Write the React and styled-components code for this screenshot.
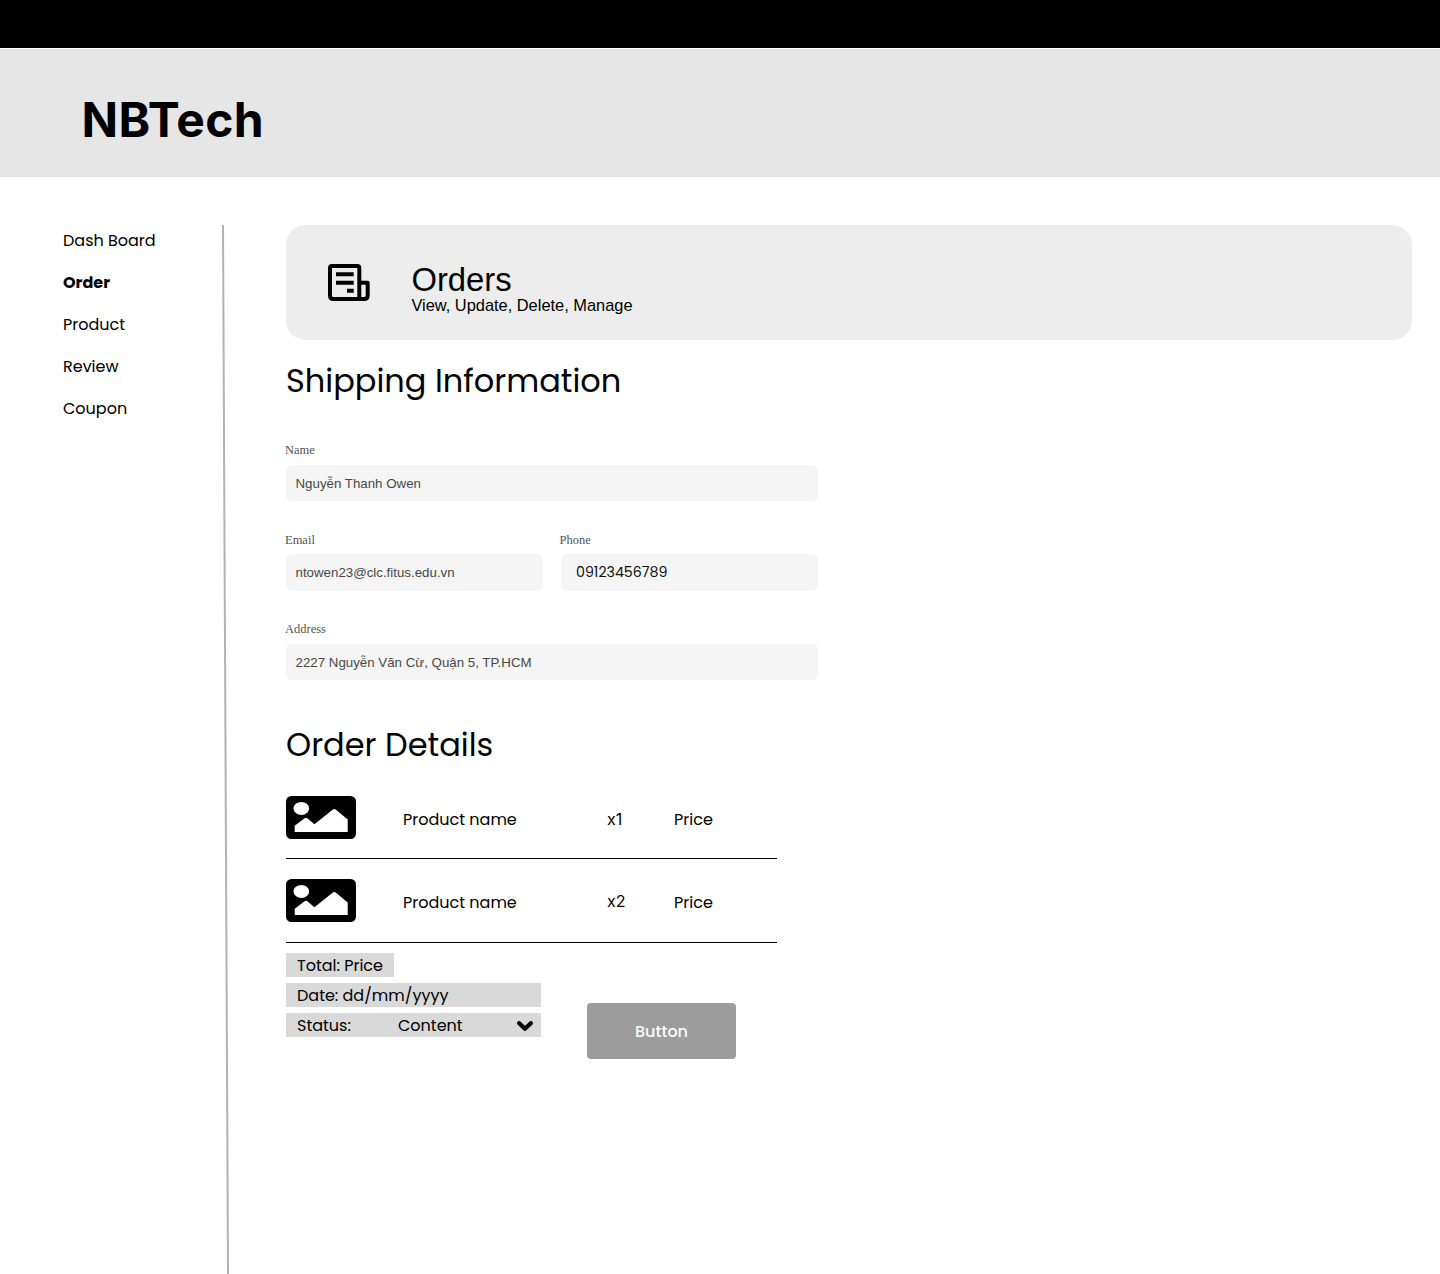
import React from "react";
import styled, { createGlobalStyle } from "styled-components";

const Global = createGlobalStyle`
  * { box-sizing: border-box; }
  body {
    margin: 0;
    background: #fff;
    color: #000;
    font-family: Poppins, Inter, "Open Sans", sans-serif;
    font-size: 16px;
    line-height: 24px;
  }
  h1, h2, p, ul { margin: 0; padding: 0; font-weight: 400; list-style: none; }
  svg { display: block; flex: none; }
`;

const Page = styled.div`
  height: 1274px;
  overflow: hidden;
  display: flex;
  flex-direction: column;
`;

const TopBar = styled.div`
  flex: none;
  height: 48px;
  background: #000;
`;

const Header = styled.header`
  flex: none;
  display: flex;
  align-items: center;
  height: 128px;
  margin-top: 1px;
  padding: 14px 0 0 81.5px;
  background: #e6e6e6;
`;

const Brand = styled.div`
  font-family: Inter, sans-serif;
  font-size: 48px;
  line-height: 60px;
  font-weight: 680;
  letter-spacing: 0.3px;
`;

const Body = styled.div`
  flex: 1;
  display: flex;
  padding: 48px 0 0 63px;
`;

const Nav = styled.nav`
  display: flex;
  flex-direction: column;
  gap: 18px;
  width: 159px;
  padding-top: 4px;
`;

const NavItem = styled.span`
  font-weight: ${(p) => (p.$active ? 700 : 400)};
`;

const Main = styled.main`
  width: 1126px;
  margin-left: 56px;
`;

const Banner = styled.section`
  display: flex;
  gap: 41.4px;
  height: 115px;
  padding: 39px 0 0 42px;
  border-radius: 20px;
  background: #ededed;
  font-family: "Liberation Sans", Arial, sans-serif;
`;

const BannerText = styled.div`
  margin-top: -3px;
`;

const BannerTitle = styled.h1`
  font-size: 32.8px;
  line-height: 37px;
`;

const BannerSub = styled.p`
  margin-top: -1px;
  font-size: 16.4px;
  line-height: 16px;
`;

const Heading = styled.h2`
  font-size: 32px;
  line-height: 48px;
`;

const ShippingSection = styled.section`
  padding-top: 17px;
`;

const Form = styled.form`
  display: grid;
  grid-template-columns: 257px 257px;
  column-gap: 17.5px;
  row-gap: 31px;
  width: 531.5px;
  margin: 36.5px 0 41px;
`;

const Field = styled.label`
  grid-column: ${(p) => (p.$wide ? "1 / -1" : "auto")};
`;

const Label = styled.span`
  display: block;
  height: 23px;
  margin-left: -1px;
  color: #555;
  font: 12.5px/16px "Liberation Serif", "Times New Roman", serif;

  ${Field} + ${Field} & {
    height: 22.5px;
    margin-top: -0.5px;
  }
`;

const Value = styled.span`
  display: flex;
  align-items: center;
  height: 36.5px;
  padding: 1.5px 0 0 9.5px;
  border-radius: 6px;
  background: #f5f5f5;
  color: #484848;
  font: 13.3px/16px "Liberation Sans", Arial, sans-serif;
`;

const PhoneValue = styled(Value)`
  padding: 0 0 0 15.5px;
  color: #111;
  font: 14.2px/20px Poppins, Inter, sans-serif;
`;

const ItemList = styled.ul`
  display: flex;
  flex-direction: column;
  gap: 20px;
  width: 491px;
  margin-top: 27px;
`;

const Item = styled.li`
  display: grid;
  grid-template-columns: 117px 204px 67px auto;
  padding-bottom: ${(p) => p.$space}px;
  border-bottom: 1px solid #000;
`;

const Cell = styled.span`
  padding-top: 12px;
`;

const Quantity = styled.span`
  padding-top: ${(p) => (p.$raised ? 10 : 11)}px;
  font-family: Inter, sans-serif;
`;

const Footer = styled.div`
  display: flex;
  align-items: flex-start;
  gap: 46px;
  margin-top: 10px;
`;

const Summary = styled.div`
  display: flex;
  flex-direction: column;
  gap: 6px;
  width: 255px;
`;

const SummaryRow = styled.div`
  display: flex;
  align-items: flex-start;
  width: ${(p) => (p.$short ? "108px" : "100%")};
  height: 24px;
  padding: 1px 8px 0 11px;
  background: #d9d9d9;
`;

const StatusLabel = styled.span`
  width: 101px;
`;

const StatusArrow = styled.svg`
  margin: 7px 0 0 auto;
`;

const Button = styled.button`
  width: 149px;
  height: 56px;
  margin-top: 50px;
  padding: 2px 0 0;
  border: 0;
  border-radius: 4px;
  background: #9c9c9c;
  color: #fafafa;
  font: 500 16px/24px Poppins, Inter, sans-serif;
`;

const Divider = () => (
  <svg width="8" height="1049" viewBox="0 0 8 1049">
    <path d="M1 0L6 1049" stroke="#b2b2b2" strokeWidth="2" />
  </svg>
);

const OrdersIcon = () => (
  <svg width="42" height="37" viewBox="0 0 42 37" fill="none" stroke="#000" strokeWidth="4">
    <path
      strokeLinejoin="round"
      d="M31.3 35V4Q31.3 2 29.3 2H4Q2 2 2 4V31.5Q2 35 5.5 35H36.2Q39.7 35 39.7 31.5V18.7H31.3"
    />
    <path d="M8 10.3H25.7M8 18.7H25.7M19 26.7H25.7" />
  </svg>
);

const PictureIcon = () => (
  <svg width="70" height="43" viewBox="0 0 70 43">
    <rect width="70" height="43" rx="5.5" />
    <ellipse cx="15.3" cy="12.4" rx="7.8" ry="6.5" fill="#fff" />
    <path d="M8.7 36V29.8L18.6 22.2Q20 21.2 21.4 22.2L28.4 28.2L46.9 13.4Q48.3 12.4 49.7 13.4L61.7 23.4V36Z" fill="#fff" />
  </svg>
);

const items = [
  { qty: "x1", space: 19 },
  { qty: "x2", space: 20, raised: true },
];

export default function App() {
  return (
    <Page>
      <Global />
      <TopBar />
      <Header>
        <Brand>NBTech</Brand>
      </Header>
      <Body>
        <Nav>
          <NavItem>Dash Board</NavItem>
          <NavItem $active>Order</NavItem>
          <NavItem>Product</NavItem>
          <NavItem>Review</NavItem>
          <NavItem>Coupon</NavItem>
        </Nav>
        <Divider />
        <Main>
          <Banner>
            <OrdersIcon />
            <BannerText>
              <BannerTitle>Orders</BannerTitle>
              <BannerSub>View, Update, Delete, Manage</BannerSub>
            </BannerText>
          </Banner>
          <ShippingSection>
            <Heading>Shipping Information</Heading>
            <Form>
              <Field $wide>
                <Label>Name</Label>
                <Value>Nguyễn Thanh Owen</Value>
              </Field>
              <Field>
                <Label>Email</Label>
                <Value>ntowen23@clc.fitus.edu.vn</Value>
              </Field>
              <Field>
                <Label>Phone</Label>
                <PhoneValue>09123456789</PhoneValue>
              </Field>
              <Field $wide>
                <Label>Address</Label>
                <Value>2227 Nguyễn Văn Cừ, Quận 5, TP.HCM</Value>
              </Field>
            </Form>
          </ShippingSection>
          <section>
            <Heading>Order Details</Heading>
            <ItemList>
              {items.map(({ qty, space, raised }) => (
                <Item key={qty} $space={space}>
                  <PictureIcon />
                  <Cell>Product name</Cell>
                  <Quantity $raised={raised}>{qty}</Quantity>
                  <Cell>Price</Cell>
                </Item>
              ))}
            </ItemList>
            <Footer>
              <Summary>
                <SummaryRow $short>Total: Price</SummaryRow>
                <SummaryRow>Date: dd/mm/yyyy</SummaryRow>
                <SummaryRow>
                  <StatusLabel>Status:</StatusLabel>
                  <span>Content</span>
                  <StatusArrow width="16" height="10" viewBox="0 0 16 10" fill="none" stroke="#000">
                    <path d="M2.2 2.2L8 7.8L13.8 2.2" strokeWidth="4.2" strokeLinecap="round" strokeLinejoin="round" />
                  </StatusArrow>
                </SummaryRow>
              </Summary>
              <Button type="button">Button</Button>
            </Footer>
          </section>
        </Main>
      </Body>
    </Page>
  );
}
